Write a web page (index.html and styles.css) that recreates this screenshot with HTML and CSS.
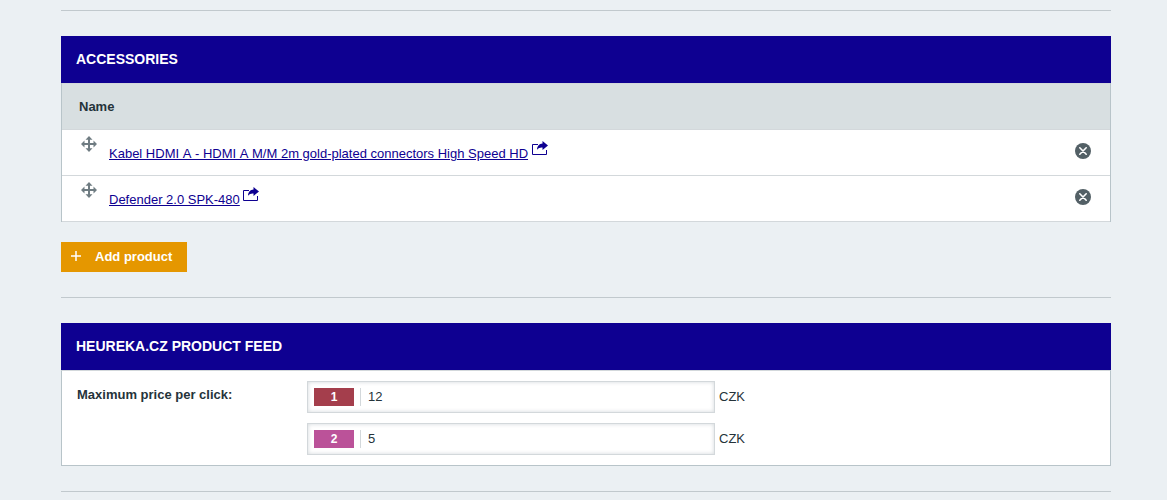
FILE: index.html
```html
<!DOCTYPE html>
<html lang="en">
<head>
<meta charset="utf-8">
<title>Product</title>
<link rel="stylesheet" href="styles.css">
</head>
<body>
<svg class="sprite" aria-hidden="true">
  <symbol id="move" viewBox="0 0 16 16"><path d="M8 0l3.500 3.700H9V7h3.500V4.500L16 8l-3.500 3.500V9H9v3.300h2.500L8 16l-3.500-3.700H7V9H3.500v2.500L0 8l3.500-3.500V7H7V3.700H4.500z"/></symbol>
  <symbol id="share" viewBox="0 0 16 14"><path d="M6 3.500H.5v10h14V9" fill="none" stroke="currentColor"/><path d="M10.500 0L16 4.500 10.500 9V6.500C8 6.300 6.500 7 5 8.800 5 5 7.500 2.600 10.500 2.500z"/></symbol>
  <symbol id="remove" viewBox="0 0 16 16"><circle cx="8" cy="8" r="8"/><path d="M4.800 4.800l6.400 6.400M11.200 4.800l-6.400 6.400" fill="none" stroke="#fff" stroke-width="1.600" stroke-linecap="round"/></symbol>
</svg>
<main class="page">
  <hr class="divider">
  <section class="panel">
    <h2 class="panel-title">ACCESSORIES</h2>
    <table class="table">
      <thead>
        <tr><th colspan="3" scope="col">Name</th></tr>
      </thead>
      <tbody>
        <tr>
          <td class="cell-move"><svg class="icon icon-move" aria-hidden="true"><use href="#move"/></svg></td>
          <td class="cell-name"><a href="#">Kabel HDMI A - HDMI A M/M 2m gold-plated connectors High Speed HD</a> <svg class="icon icon-share" aria-hidden="true"><use href="#share"/></svg></td>
          <td class="cell-remove"><button class="remove" type="button" aria-label="Remove"><svg class="icon" aria-hidden="true"><use href="#remove"/></svg></button></td>
        </tr>
        <tr>
          <td class="cell-move"><svg class="icon icon-move" aria-hidden="true"><use href="#move"/></svg></td>
          <td class="cell-name"><a href="#">Defender 2.0 SPK-480</a> <svg class="icon icon-share" aria-hidden="true"><use href="#share"/></svg></td>
          <td class="cell-remove"><button class="remove" type="button" aria-label="Remove"><svg class="icon" aria-hidden="true"><use href="#remove"/></svg></button></td>
        </tr>
      </tbody>
    </table>
    <button class="add" type="button"><svg class="add-icon" viewBox="0 0 10 12" aria-hidden="true"><path d="M5 0v10M0 5h10" fill="none" stroke="currentColor" stroke-width="1.500"/></svg>Add product</button>
  </section>
  <hr class="divider">
  <section class="panel">
    <h2 class="panel-title">HEUREKA.CZ PRODUCT FEED</h2>
    <div class="panel-body">
      <div class="form-label">Maximum price per click:</div>
      <div class="fields">
        <div class="field">
          <div class="control"><label class="badge badge-red" for="price-1">1</label><input class="price" id="price-1" type="text" value="12"></div>
          <span>CZK</span>
        </div>
        <div class="field">
          <div class="control"><label class="badge badge-pink" for="price-2">2</label><input class="price" id="price-2" type="text" value="5"></div>
          <span>CZK</span>
        </div>
      </div>
    </div>
  </section>
  <hr class="divider">
</main>
</body>
</html>
```
FILE: styles.css
```css
* { box-sizing: border-box; }

body {
  margin: 0;
  background: #ebf0f3;
  color: #25333a;
  font: 13px/18px "Liberation Sans", Arial, sans-serif;
  font-kerning: none;
}

button, input { font: inherit; color: inherit; }

.sprite { display: none; }

.page { padding: 10px 56px 8px 61px; }

.divider {
  height: 1px;
  margin: 0;
  border: 0;
  background: #c1c9cd;
}

.panel { padding: 25px 0; }

.panel-title {
  margin: 0;
  padding: 14px 15px 15px;
  background: #0e0091;
  color: #fff;
  font-size: 14px;
  line-height: 18px;
}

.table {
  width: 100%;
  border: 1px solid #b8c4c9;
  border-width: 0 1px;
  border-spacing: 0;
  background: #fff;
}

.table th {
  height: 47px;
  padding: 0 17px;
  border: 1px solid #d3d8db;
  border-width: 1px 0;
  background: #d8dfe1;
  text-align: left;
}

.table td {
  height: 46px;
  padding: 0;
  border-bottom: 1px solid #d3d8db;
  vertical-align: top;
}

.icon {
  width: 16px;
  height: 16px;
  fill: currentColor;
}

.icon-move { display: block; }

.icon-share {
  height: 14px;
  color: #0e0091;
  vertical-align: 3px;
}

.table .cell-move {
  width: 47px;
  padding: 6px 0 0 19px;
  color: #6f7c82;
}

.table .cell-name { padding-top: 11px; }

.cell-name a { color: #0e0091; }

.table .cell-remove {
  width: 35px;
  padding-top: 13px;
}

.remove {
  display: block;
  padding: 0;
  border: 0;
  background: none;
  color: #536066;
  cursor: pointer;
}

.remove .icon { display: block; }

.add {
  display: flex;
  align-items: center;
  gap: 14px;
  height: 30px;
  margin-top: 20px;
  padding: 0 15px 0 10px;
  border: 0;
  background: #e59700;
  color: #fff;
  font-weight: bold;
  cursor: pointer;
}

.add-icon {
  width: 10px;
  height: 12px;
}

.panel-body {
  display: flex;
  padding: 10px 15px;
  border: 1px solid #b8c4c9;
  border-top-color: #d3d8db;
  background: #fff;
}

.form-label {
  width: 230px;
  padding-top: 5px;
  font-weight: bold;
}

.fields {
  display: flex;
  flex: 1;
  flex-direction: column;
  gap: 10px;
}

.field {
  display: flex;
  align-items: center;
  gap: 4px;
}

.control {
  display: flex;
  align-items: center;
  gap: 6px;
  width: 408px;
  height: 32px;
  padding: 0 6px;
  border: 1px solid #d3d8db;
  box-shadow: inset 0 0 4px #d3d8db;
}

.badge {
  width: 40px;
  color: #fff;
  font-size: 12px;
  font-weight: bold;
  line-height: 18px;
  text-align: center;
}

.badge-red { background: #a43e4c; }

.badge-pink { background: #bb5299; }

.price {
  flex: 1;
  min-width: 0;
  height: 18px;
  padding: 0 7px;
  border: 0;
  border-left: 1px solid #d3d8db;
  background: none;
  outline: 0;
}
```
